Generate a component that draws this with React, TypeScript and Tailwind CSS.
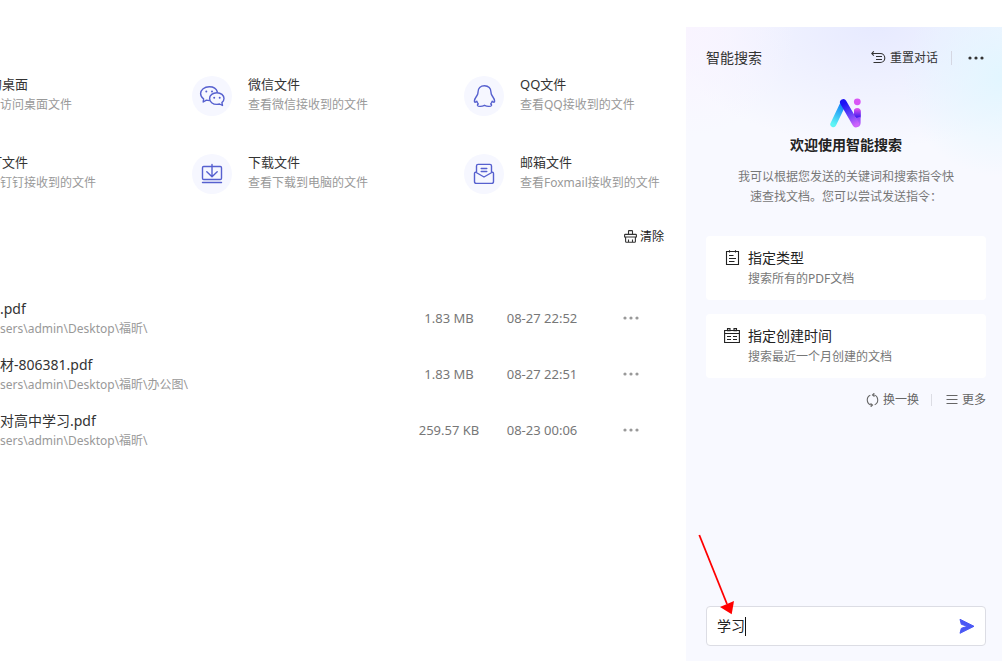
import { useState } from "react";
import type { ReactNode } from "react";

const sources = [
  { id: "desktop", title: "我的桌面", note: "快速访问桌面文件", icon: <DesktopIcon /> },
  { id: "wechat", title: "微信文件", note: "查看微信接收到的文件", icon: <WeChatIcon /> },
  { id: "qq", title: "QQ文件", note: "查看QQ接收到的文件", icon: <QQIcon /> },
  { id: "dingtalk", title: "钉钉文件", note: "查看钉钉接收到的文件", icon: <DesktopIcon /> },
  { id: "download", title: "下载文件", note: "查看下载到电脑的文件", icon: <DownloadIcon /> },
  { id: "mail", title: "邮箱文件", note: "查看Foxmail接收到的文件", icon: <MailIcon /> },
];

const files = [
  { name: ".pdf", path: "sers\\admin\\Desktop\\福昕\\", size: "1.83 MB", date: "08-27 22:52" },
  { name: "材-806381.pdf", path: "sers\\admin\\Desktop\\福昕\\办公图\\", size: "1.83 MB", date: "08-27 22:51" },
  { name: "对高中学习.pdf", path: "sers\\admin\\Desktop\\福昕\\", size: "259.57 KB", date: "08-23 00:06" },
];

function SourceSvg({ children }: { children: ReactNode }) {
  return (
    <svg viewBox="0 0 28 28" className="size-7" fill="none" stroke="#5660cf" strokeWidth="1.4" strokeLinecap="round" strokeLinejoin="round" aria-hidden="true">
      {children}
    </svg>
  );
}

function DesktopIcon() {
  return (
    <SourceSvg>
      <rect x="4.5" y="5" width="19" height="13" rx="1.5" />
      <path d="M14 18v4M9 22.5h10" />
    </SourceSvg>
  );
}

function WeChatIcon() {
  return (
    <SourceSvg>
      <path d="M19.3 9.8C18.5 6.8 15.3 4.7 11.3 4.7c-4.900 0-8.700 3-8.700 6.900 0 2.200 1.100 4 3 5.200l-.4 3.200 3.200-1.900c.9.2 1.900.4 2.900.4" />
      <path d="M18.900 10.700c-4.200 0-7.300 2.500-7.300 5.800s3.100 5.900 7.300 5.900c1 0 1.900-.1 2.700-.4l2.900 1.500-.6-2.900c1.300-1.100 2.100-2.500 2.100-4.100 0-3.300-3.100-5.800-7.100-5.800z" />
      <g fill="#5660cf" stroke="none">
        <circle cx="8.300" cy="9.500" r="1" />
        <circle cx="14" cy="9.500" r="1" />
        <circle cx="16.200" cy="15.800" r="1" />
        <circle cx="21.700" cy="15.800" r="1" />
      </g>
    </SourceSvg>
  );
}

function QQIcon() {
  return (
    <SourceSvg>
      <path d="M14.500 3.700C10.500 3.700 8 6.600 8 10.200c0 1.500-.3 2.300-1 3.300-1.300 1.900-2.600 3.600-2.600 5.500 0 1.300.7 1.500 1.500.9l.9-.7c.2 1 .8 2 1.500 2.700-.8.500-1 1-.8 1.600.8 1.400 4.500 1 7-.2 2.500 1.200 6.200 1.600 7 .2.200-.6 0-1.100-.8-1.600.7-.7 1.300-1.700 1.500-2.700l.9.700c.8.600 1.500.4 1.500-.9 0-1.900-1.300-3.600-2.600-5.500-.7-1-1-1.800-1-3.300 0-3.600-2.500-6.500-6.500-6.500z" />
    </SourceSvg>
  );
}

function DownloadIcon() {
  return (
    <SourceSvg>
      <rect x="4.500" y="6.500" width="19" height="13" rx="1.200" />
      <path d="M14 4.500V16.500M8.800 11.800l5.200 5 5.200-5M4.500 22.500h19" />
    </SourceSvg>
  );
}

function MailIcon() {
  return (
    <SourceSvg>
      <path d="M6.500 12V6c0-1 .6-1.600 1.600-1.600h11.800c1 0 1.600.6 1.600 1.600v6" />
      <path d="M4.500 13.500c0-1 .9-1.500 1.700-1L14 17l7.800-4.500c.8-.5 1.700 0 1.700 1v8c0 1.200-.7 1.900-1.900 1.900H6.400c-1.200 0-1.900-.7-1.900-1.900z" />
      <path d="M11.200 8.500h5.600M11.200 11.500h5.600" />
    </SourceSvg>
  );
}

function ClearIcon() {
  return (
    <svg viewBox="0 0 13 14" className="h-[14px] w-[13px]" fill="none" stroke="#333" strokeWidth="1.100" aria-hidden="true">
      <path d="M4.500 4.500V1.200q0-.6.600-.6h2.800q.6 0 .6.600V4.500M.6 7V5q0-.6.600-.6h10.600q.6 0 .6.600v2zM1.600 7v4.400q0 .8.800.8h8.200q.8 0 .8-.8V7M4.500 9.500v2.700M8.500 9.500v2.700" />
    </svg>
  );
}

function Dots({ className }: { className: string }) {
  return (
    <svg viewBox="0 0 16 4" className={className} fill="currentColor" aria-hidden="true">
      <circle cx="2" cy="2" r="1.600" />
      <circle cx="8" cy="2" r="1.600" />
      <circle cx="14" cy="2" r="1.600" />
    </svg>
  );
}

function ResetIcon() {
  return (
    <svg viewBox="0 0 15 13" className="h-[13px] w-[15px]" fill="none" stroke="#333" strokeWidth="1.100" aria-hidden="true">
      <path d="M2.800.3L.8 2.500l2 2.200M.8 2.500H9.300a4.500 4.500 0 0 1 0 9H2.500M5 5.500h6M5 8.500h6" />
    </svg>
  );
}

function AiLogo() {
  return (
    <svg viewBox="0 0 32 32" className="size-8" fill="none" strokeLinecap="round" aria-hidden="true">
      <defs>
        <linearGradient id="leg" gradientUnits="userSpaceOnUse" x1="3" y1="27" x2="13" y2="7">
          <stop offset="0" stopColor="#5ff5f5" />
          <stop offset="0.900" stopColor="#1688f8" />
        </linearGradient>
        <linearGradient id="slant" gradientUnits="userSpaceOnUse" x1="13" y1="4" x2="26" y2="28">
          <stop offset="0.100" stopColor="#1c12f5" />
          <stop offset="0.500" stopColor="#5b3df8" />
          <stop offset="1" stopColor="#cf63fb" />
        </linearGradient>
        <linearGradient id="stem" gradientUnits="userSpaceOnUse" x1="27" y1="11" x2="27" y2="21">
          <stop offset="0.100" stopColor="#d84ff0" />
          <stop offset="1" stopColor="#3116ee" />
        </linearGradient>
        <linearGradient id="base" gradientUnits="userSpaceOnUse" x1="27" y1="20" x2="27" y2="30">
          <stop offset="0" stopColor="#8f4af9" />
          <stop offset="1" stopColor="#c867fb" />
        </linearGradient>
      </defs>
      <path d="M3.300 27.200L12.500 8" stroke="url(#leg)" strokeWidth="6" />
      <path d="M24 14.500a3.300 3.300 0 0 1 6.600 0V20.500H24z" fill="url(#stem)" />
      <path d="M24 21l6.600-1.500v6.500c0 2.800-1.800 4.300-4.600 4.300z" fill="url(#base)" />
      <path d="M13.300 5.400L25.800 27" stroke="url(#slant)" strokeWidth="6.600" />
      <path d="M24 14.500a3.300 3.300 0 0 1 6.600 0V19.500L26.500 21L24 17z" fill="url(#stem)" />
      <circle cx="27.300" cy="4.800" r="3.400" fill="#d957f5" />
    </svg>
  );
}

function TypeIcon() {
  return (
    <svg viewBox="0 0 16 16" className="size-4" fill="none" stroke="#222" strokeWidth="1.100" aria-hidden="true">
      <path d="M2.500 1.500h12v13h-12zM5.500.2v2.300M11.500.2v2.300M5 5.500h4.500M5 8.500h7M5 11.500h5.500" />
    </svg>
  );
}

function CalendarIcon() {
  return (
    <svg viewBox="0 0 16 16" className="size-4" fill="none" stroke="#222" strokeWidth="1.100" aria-hidden="true">
      <path d="M.6 2.500h14.800v12H.6zM.6 5.500h14.800M3.500.6h2.500v2H3.500zM10 .6h2.500v2H10zM3 8.500h4M9 8.500h4M3 11.500h4M9 11.500h4" />
    </svg>
  );
}

function SwapIcon() {
  return (
    <svg viewBox="0 0 13 14" className="h-[14px] w-[13px]" fill="none" stroke="#666" strokeWidth="1.100" aria-hidden="true">
      <path d="M4.300 2.300A5.200 5.200 0 0 0 6 12.200M8.700 11.700A5.200 5.200 0 0 0 7 1.800" />
      <path d="M8.300.2L6.500 1.900l2 1.600M4.700 13.800l1.800-1.700-2-1.600" />
    </svg>
  );
}

function ListIcon() {
  return (
    <svg viewBox="0 0 12 12" className="size-3" fill="none" stroke="#666" strokeWidth="1" aria-hidden="true">
      <path d="M.5 1.500h11M.5 5.500h11M.5 9.500h11" />
    </svg>
  );
}

function PromptCard({ icon, title, note }: { icon: ReactNode; title: string; note: string }) {
  return (
    <button type="button" className="flex h-16 w-full items-start gap-2 rounded bg-white px-[18px] py-3 text-left">
      <span className="mt-[2px] shrink-0">{icon}</span>
      <span className="flex flex-col">
        <span className="text-sm leading-5 text-[#222]">{title}</span>
        <span className="text-xs leading-[22px] text-[#777]">{note}</span>
      </span>
    </button>
  );
}

export default function App() {
  const [query, setQuery] = useState("学习");

  return (
    <div className="flex min-h-screen overflow-hidden bg-white font-['Noto_Sans','Noto_Sans_CJK_SC',sans-serif] text-[#333]">
      <main className="min-w-0 flex-1 overflow-hidden pt-[74px]">
        <div className="-ml-20 grid grid-cols-[272px_272px_1fr] gap-y-[34px]">
          {sources.map((s) => (
            <a key={s.id} href={`#${s.id}`} className="flex h-11 items-center gap-4 whitespace-nowrap">
              <span className="flex size-10 shrink-0 items-center justify-center rounded-full bg-[#f6f7ff]">{s.icon}</span>
              <span className="flex flex-col self-start">
                <span className="text-[13px] leading-5 text-[#333]">{s.title}</span>
                <span className="text-xs leading-[22px] text-[#999]">{s.note}</span>
              </span>
            </a>
          ))}
        </div>

        <div className="mt-[31px] flex justify-end pr-[22px]">
          <button type="button" className="flex items-center gap-[3px] text-xs leading-5 text-[#222]">
            <ClearIcon />
            清除
          </button>
        </div>

        <table className="mt-[43px] w-full table-fixed border-collapse">
          <colgroup>
            <col />
            <col className="w-[100px]" />
            <col className="w-[86px]" />
            <col className="w-[101px]" />
          </colgroup>
          <tbody>
            {files.map((f) => (
              <tr key={f.date} className="h-14">
                <td className="whitespace-nowrap p-0 pt-[2px]">
                  <div className="text-sm leading-5 text-[#333]">{f.name}</div>
                  <div className="text-xs leading-5 text-[#999]">{f.path}</div>
                </td>
                <td className="whitespace-nowrap p-0 text-center text-[13px] leading-5 text-[#777]">{f.size}</td>
                <td className="whitespace-nowrap p-0 text-center text-[13px] leading-5 text-[#777]">{f.date}</td>
                <td className="p-0 pr-[10px] text-center">
                  <button type="button" aria-label="更多操作" className="flex w-full justify-center py-2 text-[#999]">
                    <Dots className="h-1 w-4" />
                  </button>
                </td>
              </tr>
            ))}
          </tbody>
        </table>
      </main>

      <aside className="mt-[27px] flex w-[316px] shrink-0 flex-col bg-[#f8f9ff] bg-[radial-gradient(circle_100px_at_100%_50px,#e2f6ff,#e2f6ff00),radial-gradient(circle_110px_at_0%_0%,#f9f4ff,#f9f4ff00),radial-gradient(ellipse_210px_120px_at_60%_0%,#e7eaff,#e7eaff00)] pl-5 pr-4">
        <header className="flex h-[61px] items-center">
          <h2 className="flex-1 text-sm leading-5 text-[#333]">智能搜索</h2>
          <button type="button" className="flex items-center gap-1 text-xs leading-5 text-[#333]">
            <ResetIcon />
            重置对话
          </button>
          <span className="ml-[13px] h-[14px] w-px bg-[#d5d7e2]" />
          <button type="button" aria-label="更多" className="ml-4 mr-[2px] text-[#333]">
            <Dots className="h-1 w-4" />
          </button>
        </header>

        <div className="flex flex-col items-center pt-[9px] text-center">
          <AiLogo />
          <h1 className="mt-[6px] text-sm font-bold leading-5 text-[#222]">欢迎使用智能搜索</h1>
          <p className="mt-3 w-[216px] text-xs leading-5 text-[#777]">我可以根据您发送的关键词和搜索指令快速查找文档。您可以尝试发送指令：</p>
        </div>

        <div className="mt-[29px] flex flex-col gap-[14px]">
          <PromptCard icon={<TypeIcon />} title="指定类型" note="搜索所有的PDF文档" />
          <PromptCard icon={<CalendarIcon />} title="指定创建时间" note="搜索最近一个月创建的文档" />
        </div>

        <div className="mt-3 flex items-center justify-end text-xs leading-5 text-[#666]">
          <button type="button" className="flex items-center gap-1">
            <SwapIcon />
            换一换
          </button>
          <span className="ml-3 mr-[14px] h-3 w-px bg-[#dcdde4]" />
          <button type="button" className="flex items-center gap-1">
            <ListIcon />
            更多
          </button>
        </div>

        <form className="relative mb-[15px] mt-auto flex h-10 items-center rounded border border-[#dcdde4] bg-white px-[10px]" onSubmit={(e) => e.preventDefault()}>
          <input
            type="text"
            aria-label="搜索指令"
            value={query}
            onChange={(e) => setQuery(e.target.value)}
            className="min-w-0 bg-transparent text-sm leading-5 text-[#222] caret-transparent outline-none [field-sizing:content]"
          />
          <span className="h-[19px] w-px shrink-0 bg-[#111]" />
          <button type="submit" aria-label="发送" className="ml-auto">
            <svg viewBox="0 0 16 16" className="size-4" fill="#4a58f5" stroke="#4a58f5" strokeLinejoin="round" aria-hidden="true">
              <path d="M1 1.300L15 8.300L1 15.300L2.300 10.300L8.500 8.300L2.300 6.300z" />
            </svg>
          </button>
          <svg viewBox="0 0 40 82" className="pointer-events-none absolute -left-[9px] -top-[73px] h-[82px] w-10" aria-hidden="true">
            <path d="M1.300 1L29 70" stroke="#f00" strokeWidth="1.800" />
            <path d="M22 73L36 67L33.700 80.300z" fill="#f00" />
          </svg>
        </form>
      </aside>
    </div>
  );
}
